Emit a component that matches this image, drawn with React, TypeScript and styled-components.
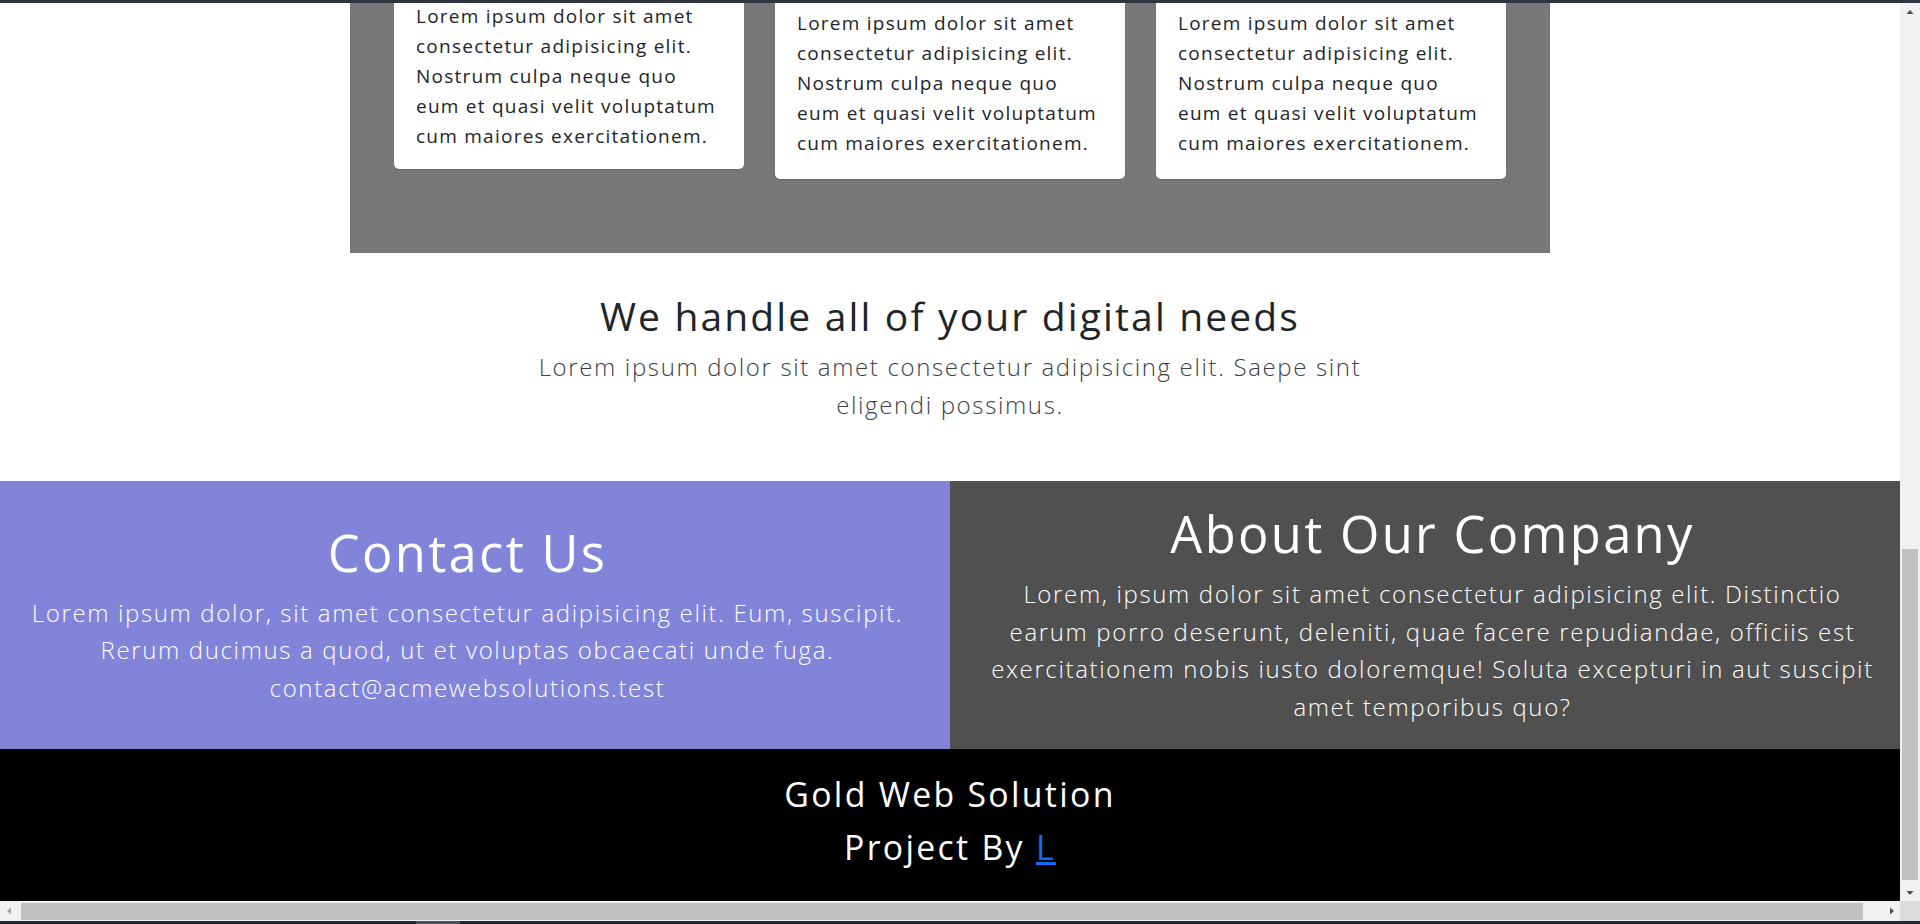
import React from "react";
import styled, { createGlobalStyle } from "styled-components";

const GlobalStyle = createGlobalStyle`
  *, *::before, *::after { box-sizing: border-box; }
  html, body { margin: 0; padding: 0; background: #ffffff; overflow: hidden; }
  body {
    font-family: "Open Sans", "Liberation Sans", Arial, sans-serif;
    color: #212529;
    -webkit-font-smoothing: antialiased;
  }
`;

const Screen = styled.div`
  width: 1920px;
  height: 924px;
  display: flex;
  flex-direction: column;
  background: #ffffff;
`;

const WindowEdge = styled.div<{ $bottom?: boolean }>`
  flex: none;
  height: 3px;
  display: flex;
  background: ${(p) => (p.$bottom ? "#24282f" : "#2f3441")};
`;

const TaskMark = styled.span`
  margin-left: 416px;
  width: 44px;
  background: #4b5058;
`;

const Body = styled.div`
  flex: 1;
  min-height: 0;
  display: flex;
`;

const Viewport = styled.main`
  flex: 1;
  min-width: 0;
  overflow: hidden;
  display: flex;
  flex-direction: column;
  justify-content: flex-end;
`;

/* ---------- services panel ---------- */
const Showcase = styled.section`
  flex: none;
  display: flex;
  justify-content: center;
`;

const ShowcasePanel = styled.div`
  width: 1200px;
  background: #777777;
  padding: 40px 44px 74px;
  display: flex;
  gap: 31px;
  align-items: flex-start;
`;

const Card = styled.article<{ $raised?: boolean }>`
  flex: none;
  width: 350px;
  background: #ffffff;
  border-radius: 5px;
  padding: 20px 22px ${(p) => (p.$raised ? "18px" : "21px")};
  transform: ${(p) => (p.$raised ? "translateY(-7px)" : "none")};
  box-shadow: 0 1px 1px rgba(0, 0, 0, 0.12);
`;

const CardText = styled.p`
  margin: 0;
  font-size: 19px;
  letter-spacing: 1.25px;
  line-height: 30px;
  font-weight: 400;
  color: #212529;
  white-space: nowrap;
`;

/* ---------- intro ---------- */
const Intro = styled.section`
  flex: none;
  padding: 39px 0 57px;
  text-align: center;
  background: #ffffff;
`;

const IntroTitle = styled.h2`
  margin: 0 0 8px;
  font-size: 39px;
  letter-spacing: 2.15px;
  line-height: 48px;
  font-weight: 400;
  color: #212529;
`;

const IntroText = styled.p`
  margin: 0;
  font-size: 24px;
  letter-spacing: 1.64px;
  line-height: 38px;
  font-weight: 300;
  color: #3c4047;
  white-space: nowrap;
`;

/* ---------- contact / about ---------- */
const InfoRow = styled.section`
  flex: none;
  display: grid;
  grid-template-columns: 1fr 1fr;
`;

const InfoCell = styled.div<{ $tone: "contact" | "about" }>`
  background: ${(p) => (p.$tone === "contact" ? "#8184d8" : "#505050")};
  color: #ffffff;
  padding: ${(p) => (p.$tone === "contact" ? "24px 25px 24px 10px" : "24px 10px 24px 25px")};
  display: flex;
  flex-direction: column;
  justify-content: center;
  align-items: center;
  text-align: center;
`;

const InfoTitle = styled.h2`
  margin: 0 0 12px;
  font-size: 50.7px;
  letter-spacing: 2.3px;
  line-height: 57.6px;
  font-weight: 400;
`;

const InfoText = styled.p`
  margin: 0;
  font-size: 24px;
  letter-spacing: 1.64px;
  line-height: 37.5px;
  font-weight: 300;
  white-space: nowrap;
`;

/* ---------- footer ---------- */
const Footer = styled.footer`
  flex: none;
  background: #000000;
  color: #ffffff;
  padding: 24px 0 32px;
  display: flex;
  flex-direction: column;
  align-items: center;
  gap: 10px;
`;

const FooterLine = styled.p`
  margin: 0;
  font-size: 33.8px;
  letter-spacing: 2.3px;
  line-height: 43px;
  font-weight: 500;
`;

const AuthorLink = styled.a`
  color: #0d6efd;
  text-decoration: underline;
`;

/* ---------- scrollbars ---------- */
const VScroll = styled.div`
  flex: none;
  width: 20px;
  background: #f1f1f1;
  display: flex;
  flex-direction: column;
`;

const ScrollButton = styled.div<{ $wide?: boolean }>`
  flex: none;
  width: ${(p) => (p.$wide ? "17px" : "20px")};
  height: ${(p) => (p.$wide ? "auto" : "17px")};
  display: flex;
  align-items: center;
  justify-content: center;
`;

const VTrack = styled.div`
  flex: 1;
  display: flex;
  flex-direction: column;
  justify-content: flex-end;
  padding: 0 2px 4px;
`;

const VThumb = styled.div`
  height: 331px;
  background: #c1c1c1;
`;

const HScroll = styled.div`
  flex: none;
  height: 20px;
  display: flex;
  background: #f1f1f1;
`;

const HTrack = styled.div`
  flex: 1;
  display: flex;
  padding: 2px 20px 1px 4px;
`;

const HThumb = styled.div`
  flex: 1;
  background: #c1c1c1;
`;

const Corner = styled.div`
  flex: none;
  width: 20px;
  background: #dcdcdc;
`;

type Dir = "up" | "down" | "left" | "right";
const arrowPoints: Record<Dir, string> = {
  up: "0.5,6 4,2 7.5,6",
  down: "0.5,2 4,6 7.5,2",
  left: "6,0.5 2,4 6,7.5",
  right: "2,0.5 6,4 2,7.5",
};

const Arrow = ({ dir, color }: { dir: Dir; color: string }) => (
  <svg width="8" height="8" viewBox="0 0 8 8" aria-hidden="true">
    <polygon points={arrowPoints[dir]} fill={color} />
  </svg>
);

const Lines = ({ lines }: { lines: string[] }) => (
  <>
    {lines.map((l, i) => (
      <React.Fragment key={i}>
        {i > 0 && <br />}
        {l}
      </React.Fragment>
    ))}
  </>
);

const cardLines = [
  "Lorem ipsum dolor sit amet",
  "consectetur adipisicing elit.",
  "Nostrum culpa neque quo",
  "eum et quasi velit voluptatum",
  "cum maiores exercitationem.",
];

const introLines = [
  "Lorem ipsum dolor sit amet consectetur adipisicing elit. Saepe sint",
  "eligendi possimus.",
];

const contactLines = [
  "Lorem ipsum dolor, sit amet consectetur adipisicing elit. Eum, suscipit.",
  "Rerum ducimus a quod, ut et voluptas obcaecati unde fuga.",
  "contact@acmewebsolutions.test",
];

const aboutLines = [
  "Lorem, ipsum dolor sit amet consectetur adipisicing elit. Distinctio",
  "earum porro deserunt, deleniti, quae facere repudiandae, officiis est",
  "exercitationem nobis iusto doloremque! Soluta excepturi in aut suscipit",
  "amet temporibus quo?",
];

export default function App() {
  return (
    <>
      <GlobalStyle />
      <Screen>
        <WindowEdge />
        <Body>
          <Viewport>
            <Showcase>
              <ShowcasePanel>
                {[0, 1, 2].map((i) => (
                  <Card key={i} $raised={i === 0}>
                    <CardText>
                      <Lines lines={cardLines} />
                    </CardText>
                  </Card>
                ))}
              </ShowcasePanel>
            </Showcase>

            <Intro>
              <IntroTitle>We handle all of your digital needs</IntroTitle>
              <IntroText>
                <Lines lines={introLines} />
              </IntroText>
            </Intro>

            <InfoRow>
              <InfoCell $tone="contact">
                <InfoTitle>Contact Us</InfoTitle>
                <InfoText>
                  <Lines lines={contactLines} />
                </InfoText>
              </InfoCell>
              <InfoCell $tone="about">
                <InfoTitle>About Our Company</InfoTitle>
                <InfoText>
                  <Lines lines={aboutLines} />
                </InfoText>
              </InfoCell>
            </InfoRow>

            <Footer>
              <FooterLine>Gold Web Solution</FooterLine>
              <FooterLine>
                Project By <AuthorLink href="#">L</AuthorLink>
              </FooterLine>
            </Footer>
          </Viewport>

          <VScroll>
            <ScrollButton>
              <Arrow dir="up" color="#505050" />
            </ScrollButton>
            <VTrack>
              <VThumb />
            </VTrack>
            <ScrollButton>
              <Arrow dir="down" color="#505050" />
            </ScrollButton>
          </VScroll>
        </Body>

        <HScroll>
          <ScrollButton $wide>
            <Arrow dir="left" color="#a3a3a3" />
          </ScrollButton>
          <HTrack>
            <HThumb />
          </HTrack>
          <ScrollButton $wide>
            <Arrow dir="right" color="#505050" />
          </ScrollButton>
          <Corner />
        </HScroll>

        <WindowEdge $bottom>
          <TaskMark />
        </WindowEdge>
      </Screen>
    </>
  );
}
